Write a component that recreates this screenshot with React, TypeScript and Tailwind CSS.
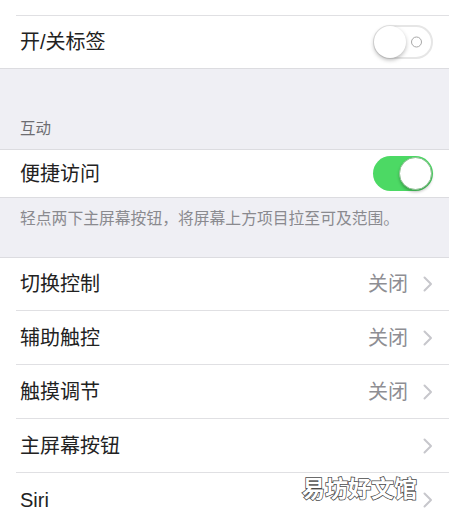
import type { ReactNode } from 'react';

const font = 'font-["Liberation_Sans","Noto_Sans_CJK_SC",sans-serif]';

function Chevron() {
  return (
    <svg width="10" height="16" viewBox="0 0 10 16" className="shrink-0">
      <polyline points="1.5,1.5 8,8 1.5,14.5" fill="none" stroke="#c7c7cc" strokeWidth="2" strokeLinecap="round" strokeLinejoin="round" />
    </svg>
  );
}

function Toggle({ on }: { on: boolean }) {
  if (on) {
    return (
      <div className="relative w-[60px] h-[35px] rounded-full bg-[#4cd964] shrink-0">
        <div className="absolute right-[1px] top-[1px] w-[33px] h-[33px] rounded-full bg-white border border-[#8fbf93] shadow-[0_2px_3px_rgba(0,0,0,0.25)]" />
      </div>
    );
  }
  return (
    <div className="relative w-[60px] h-[34px] rounded-full bg-white border-2 border-[#e6e6e6] shrink-0">
      <div className="absolute right-[9px] top-1/2 -translate-y-1/2 w-[11px] h-[11px] rounded-full border-[1.5px] border-[#a8a8a8]" />
      <div className="absolute -left-[1px] -top-[1px] w-[32px] h-[32px] rounded-full bg-white shadow-[0_2px_4px_rgba(0,0,0,0.28)]" />
    </div>
  );
}

function Row({ label, right, height = 'h-[54px]', line = true }: { label: string; right?: ReactNode; height?: string; line?: boolean }) {
  return (
    <div className={`ml-4 ${height} ${line ? 'border-t border-[#e0e0e3]' : ''} flex items-center justify-between pl-1 pr-4`}>
      <span className="text-[20px] text-[#222]">{label}</span>
      {right}
    </div>
  );
}

function Detail({ value }: { value?: string }) {
  return (
    <div className="flex items-center gap-[15px]">
      {value && <span className="text-[20px] text-[#8e8e93]">{value}</span>}
      <Chevron />
    </div>
  );
}

export default function App() {
  return (
    <div className={`relative w-[449px] h-[524px] overflow-hidden bg-[#efeff4] ${font}`}>
      {/* tags group */}
      <div className="bg-white border-b border-[#dcdce0]">
        <div className="h-[15px]" />
        <Row label="开/关标签" height="h-[53px]" right={<Toggle on={false} />} />
      </div>

      {/* interaction section */}
      <div className="h-[80px] flex items-end pl-5 pb-[9px]">
        <span className="text-[15.5px] text-[#6d6d72]">互动</span>
      </div>
      <div className="bg-white border-y border-[#dcdce0]">
        <Row label="便捷访问" height="h-[47px]" line={false} right={<Toggle on />} />
      </div>
      <div className="h-[59px] pl-5 pt-[9px]">
        <span className="text-[15.8px] text-[#8a8a8f]">轻点两下主屏幕按钮，将屏幕上方项目拉至可及范围。</span>
      </div>

      {/* accessibility options */}
      <div className="bg-white border-t border-[#dcdce0]">
        <Row label="切换控制" height="h-[52px]" line={false} right={<Detail value="关闭" />} />
        <Row label="辅助触控" right={<Detail value="关闭" />} />
        <Row label="触摸调节" right={<Detail value="关闭" />} />
        <Row label="主屏幕按钮" right={<Detail />} />
        <Row label="Siri" right={<Detail />} />
      </div>

      <div className="absolute left-[302px] top-[478px] text-[23px] font-bold leading-none text-white [-webkit-text-stroke:1.5px_#4a4a4a] [paint-order:stroke_fill]">
        易坊好文馆
      </div>
    </div>
  );
}
